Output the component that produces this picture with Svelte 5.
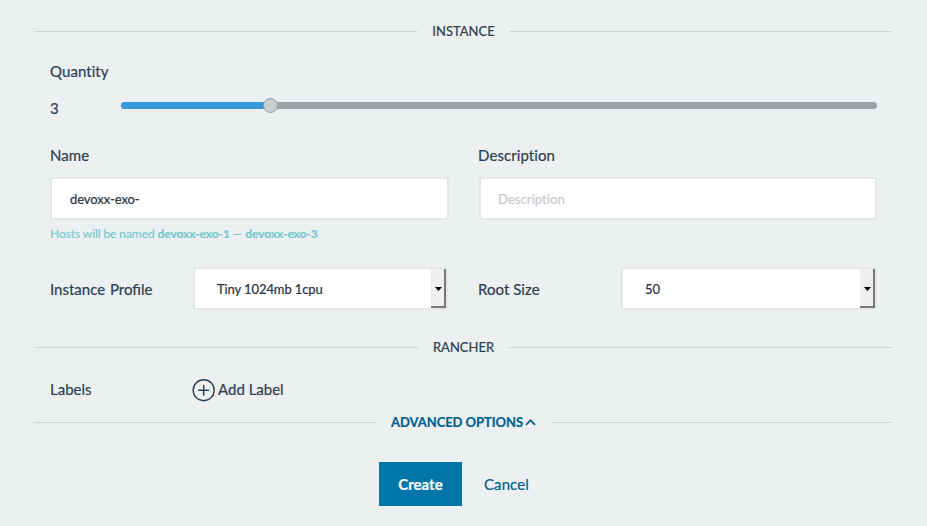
<script>
  let quantity = $state(3);
  const prefix = 'devoxx-exo-';
</script>

<main>
  <div class="divider top"><span>INSTANCE</span></div>
  <section class="quantity">
    <div class="label">Quantity</div>
    <div class="slider"><span>{quantity}</span><div class="track"><div class="fill"></div><i></i></div></div>
  </section>
  <section class="fields">
    <div class="field"><label for="name">Name</label><input id="name" value={prefix} /><p>Hosts will be named <b>{prefix}1</b> — <b>{prefix}{quantity}</b></p></div>
    <div class="field"><label for="desc">Description</label><input id="desc" placeholder="Description" /></div>
  </section>
  <section class="selects">
    <div class="row"><span class="profile">Instance Profile</span><div class="select">Tiny 1024mb 1cpu<i><svg width="7" height="4" viewBox="0 0 7 4"><path d="M0 0h7L3.5 4z" /></svg></i></div></div>
    <div class="row"><span>Root Size</span><div class="select wide">50<i><svg width="7" height="4" viewBox="0 0 7 4"><path d="M0 0h7L3.5 4z" /></svg></i></div></div>
  </section>
  <div class="divider rancher"><span>RANCHER</span></div>
  <section class="labels"><span>Labels</span><button><svg width="24" height="24" viewBox="0 0 24 24" fill="none" stroke="#2c3e50" stroke-width="1.4"><circle cx="11.7" cy="12.2" r="10.5" /><path d="M6.2 12.2h11M11.7 6.7v11" /></svg><span>Add Label</span></button></section>
  <div class="divider advanced"><span>ADVANCED OPTIONS<svg width="11" height="8" viewBox="0 0 11 8" fill="none" stroke="#005f8d" stroke-width="1.8"><path d="M1 6.8l4.5-4.6 4.5 4.6" /></svg></span></div>
  <footer><button class="create">Create</button><button class="cancel">Cancel</button></footer>
</main>

<style>
  :global(body) { background: #ecf0f1; }
  main { width: 927px; height: 526px; box-sizing: border-box; overflow: hidden; padding: 0 35px; background: #ecf0f1; color: #2c3e50; font: 15px/20px Lato, sans-serif; font-variant-ligatures: none; -webkit-text-stroke: 0.2px currentColor; }
  .divider { display: flex; align-items: center; gap: 15px; height: 20px; font-size: 13px; }
  .divider::before, .divider::after { content: ''; height: 1px; flex: 1; background: #ccd1d3; }
  .top { padding-top: 21px; }
  section { padding: 0 15px; }
  .quantity { padding-top: 20px; }
  .label { letter-spacing: 0.06px; }
  .slider { display: flex; align-items: center; height: 20px; margin-top: 17px; }
  .slider > span { width: 71px; }
  .track { position: relative; flex: 1; height: 7px; border-radius: 4px; background: #9aa3a7; margin-top: -5px; }
  .fill { width: 150px; height: 7px; border-radius: 4px; background: #3498db; }
  .track i { position: absolute; left: 142px; top: -4px; width: 13px; height: 13px; border: 1px solid #98a1a5; border-radius: 50%; background: #cacfd2; }
  .fields, .selects { display: flex; gap: 30px; }
  .fields { padding-top: 27px; height: 98px; }
  .field { width: 398px; }
  label { display: block; letter-spacing: 0.08px; }
  input { display: block; box-sizing: border-box; width: 399px; height: 43px; margin: 12px 0 0; padding: 0 18px; border: 2px solid #e3e7e7; border-radius: 2px; background: #fff; color: #2b303b; font: 13px Lato, sans-serif; letter-spacing: -0.07px; }
  #desc { width: 398px; margin-left: 1px; padding-left: 17px; letter-spacing: 0.08px; }
  input::placeholder { color: #c5c9d0; opacity: 1; }
  p { margin: 5px 0 0; font-size: 12px; line-height: 18px; color: #76c8d0; letter-spacing: -0.08px; }
  .selects { padding-top: 24px; }
  .row { display: flex; align-items: center; width: 398px; height: 43px; }
  .row > span { flex: 0 0 143px; letter-spacing: 0.04px; }
  .row > .profile { font-variant-ligatures: normal; letter-spacing: 0; word-spacing: 1px; }
  .select { flex: none; display: flex; align-items: center; box-sizing: border-box; width: 255px; height: 43px; padding: 0 0 0 22px; border: 2px solid #e3e7e7; border-radius: 2px; background: #fff; font-size: 13px; line-height: 18px; color: #2b303b; letter-spacing: -0.1px; }
  .wide { width: 256px; }
  .select i { box-sizing: border-box; display: flex; align-items: center; justify-content: center; width: 15px; height: 39px; margin-left: auto; padding-left: 1px; border-right: 2px solid #777; border-bottom: 2px solid #777; background: #efefef; }
  .select svg { margin-top: 2px; }
  .rancher { margin-top: 27px; }
  .labels { display: flex; align-items: center; height: 24px; padding-top: 21px; }
  .labels > span { width: 142px; margin-top: -2px; }
  button { display: flex; align-items: center; border: 0; padding: 0; background: none; color: inherit; font: 15px Lato, sans-serif; font-variant-ligatures: none; }
  .labels button { line-height: 22px; }
  .labels button span { margin-top: -2px; }
  .labels svg { margin-right: 2px; }
  .advanced { margin-top: 10px; color: #005f8d; font-weight: 700; }
  .advanced span { display: flex; align-items: center; gap: 2px; letter-spacing: -0.06px; }
  footer { display: flex; padding: 30px 0 0 344px; gap: 22px; }
  .create { justify-content: center; width: 83px; height: 44px; background: #0075a8; color: #fff; font-weight: 700; }
  .cancel { color: #005f8d; letter-spacing: 0.08px; }
</style>
